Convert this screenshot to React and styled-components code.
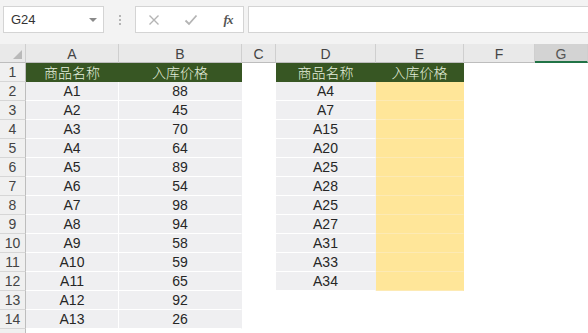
import React from "react";
import styled, { createGlobalStyle } from "styled-components";

const GlobalStyle = createGlobalStyle`
  html, body {
    margin: 0;
    padding: 0;
    background: #ffffff;
    font-family: "Liberation Sans", Arial, "Noto Sans CJK SC", sans-serif;
  }
`;

const Page = styled.div`
  width: 588px;
  height: 333px;
  overflow: hidden;
  background: #ffffff;
`;

const Toolbar = styled.div`
  height: 44px;
  box-sizing: border-box;
  padding: 6px 0 0 3px;
  background: #f3f3f3;
  display: flex;
  align-items: flex-start;
`;

const NameBox = styled.div`
  width: 101px;
  height: 27px;
  box-sizing: border-box;
  background: #fff;
  border: 1px solid #d4d4d4;
  display: flex;
  align-items: center;
  justify-content: space-between;
  padding: 0 6px 0 7px;
  font-size: 13px;
  color: #333;
`;

const Caret = styled.span`
  width: 0;
  height: 0;
  border-left: 4px solid transparent;
  border-right: 4px solid transparent;
  border-top: 4px solid #8a8a8a;
`;

const Grip = styled.div`
  width: 31px;
  height: 27px;
  display: flex;
  flex-direction: column;
  align-items: center;
  justify-content: center;
  gap: 2px;
`;

const Dot = styled.span`
  width: 2px;
  height: 2px;
  background: #b5b5b5;
`;

const ButtonBox = styled.div`
  width: 109px;
  height: 27px;
  box-sizing: border-box;
  background: #fff;
  border: 1px solid #d4d4d4;
  display: flex;
  align-items: center;
  padding: 0 0 0 9px;
  gap: 19px;
`;

const IconSlot = styled.span`
  width: 18px;
  display: flex;
  align-items: center;
  justify-content: center;
`;

const Fx = styled.span`
  font-family: "Liberation Serif", "Times New Roman", serif;
  font-style: italic;
  font-weight: bold;
  font-size: 13px;
  color: #555;
  letter-spacing: -1px;
`;

const FormulaBox = styled.div`
  flex: 1;
  height: 27px;
  margin-left: 4px;
  box-sizing: border-box;
  background: #fff;
  border: 1px solid #d4d4d4;
  border-right: none;
`;

const Sheet = styled.div`
  display: grid;
  grid-template-columns: 26px 93px 123px 34px 100px 88px 71px 1fr;
  grid-auto-rows: 19px;
`;

const Corner = styled.div`
  background: #e9e9e9;
  border-right: 1px solid #cfcfcf;
  border-bottom: 1px solid #bdbdbd;
  position: relative;
  &::after {
    content: "";
    position: absolute;
    right: 3px;
    bottom: 3px;
    width: 0;
    height: 0;
    border-left: 9px solid transparent;
    border-bottom: 9px solid #b9b9b9;
  }
`;

const ColHead = styled.div`
  box-sizing: border-box;
  background: ${(p) => (p.$active ? "#d3d3d3" : "#e9e9e9")};
  border-right: 1px solid #cfcfcf;
  border-bottom: ${(p) => (p.$active ? "2px solid #217346" : "1px solid #bdbdbd")};
  color: ${(p) => (p.$active ? "#555" : "#444")};
  font-size: 14px;
  display: flex;
  align-items: center;
  justify-content: center;
  padding-top: 2px;
`;

const RowHead = styled.div`
  box-sizing: border-box;
  background: #f0f0f0;
  border-right: 1px solid #bdbdbd;
  border-bottom: 1px solid #d6d6d6;
  color: #444;
  font-size: 14px;
  display: flex;
  align-items: center;
  justify-content: center;
`;

const fills = {
  head: "#375623",
  gray: "#efeff1",
  yellow: "#ffe699",
  blank: "#ffffff",
};

const Cell = styled.div`
  box-sizing: border-box;
  background: ${(p) => fills[p.$fill]};
  color: ${(p) => (p.$fill === "head" ? "#e6f0de" : "#262626")};
  font-weight: ${(p) => (p.$fill === "head" ? 300 : 400)};
  border-bottom: 1px solid
    ${(p) =>
      p.$fill === "head"
        ? "#375623"
        : p.$fill === "yellow"
        ? "#fdeab4"
        : "#ffffff"};
  border-right: 1px solid
    ${(p) => (p.$fill === "gray" && p.$sep ? "#ffffff" : "transparent")};
  font-family: "Liberation Sans", Arial, "Noto Sans CJK SC", sans-serif;
  font-size: 14px;
  display: flex;
  align-items: center;
  justify-content: center;
`;

const left = [
  ["A1", 88], ["A2", 45], ["A3", 70], ["A4", 64], ["A5", 89], ["A6", 54],
  ["A7", 98], ["A8", 94], ["A9", 58], ["A10", 59], ["A11", 65], ["A12", 92],
  ["A13", 26],
];

const lookup = ["A4", "A7", "A15", "A20", "A25", "A28", "A25", "A27", "A31", "A33", "A34"];

const columns = ["A", "B", "C", "D", "E", "F", "G"];

const CrossIcon = () => (
  <svg width="12" height="12" viewBox="0 0 12 12">
    <path d="M1.5 1.5 L10.5 10.5 M10.5 1.5 L1.5 10.5" stroke="#b4b4b4" strokeWidth="1.4" fill="none" />
  </svg>
);

const CheckIcon = () => (
  <svg width="14" height="12" viewBox="0 0 14 12">
    <path d="M1.5 6.5 L5 10 L12.5 1.5" stroke="#b4b4b4" strokeWidth="1.8" fill="none" />
  </svg>
);

const App = () => {
  const rows = [];
  for (let r = 1; r <= 15; r++) {
    const i = r - 2;
    let a = null, b = null, d = null;
    let fa = "blank", fd = "blank", fe = "blank";
    if (r === 1) {
      a = "商品名称";
      b = "入库价格";
      d = "商品名称";
      fa = fd = fe = "head";
    } else if (i < left.length) {
      a = left[i][0];
      b = left[i][1];
      fa = "gray";
      if (i < lookup.length) {
        d = lookup[i];
        fd = "gray";
        fe = "yellow";
      }
    }
    rows.push(
      <React.Fragment key={r}>
        {/* row 15 only peeks in at the bottom edge, its number hidden */}
        <RowHead>{r < 15 ? r : null}</RowHead>
        <Cell $fill={fa} $sep>{a}</Cell>
        <Cell $fill={fa}>{b}</Cell>
        <Cell $fill="blank" />
        <Cell $fill={fd}>{d}</Cell>
        <Cell $fill={fe}>{r === 1 ? "入库价格" : null}</Cell>
        <Cell $fill="blank" />
        <Cell $fill="blank" />
      </React.Fragment>
    );
  }

  return (
    <>
      <GlobalStyle />
      <Page>
        <Toolbar>
          <NameBox>
            G24
            <Caret />
          </NameBox>
          <Grip>
            <Dot />
            <Dot />
            <Dot />
          </Grip>
          <ButtonBox>
            <IconSlot><CrossIcon /></IconSlot>
            <IconSlot><CheckIcon /></IconSlot>
            <IconSlot><Fx>fx</Fx></IconSlot>
          </ButtonBox>
          <FormulaBox />
        </Toolbar>
        <Sheet>
          <Corner />
          {columns.map((c) => (
            <ColHead key={c} $active={c === "G"}>{c}</ColHead>
          ))}
          {rows}
        </Sheet>
      </Page>
    </>
  );
};

export default App;
